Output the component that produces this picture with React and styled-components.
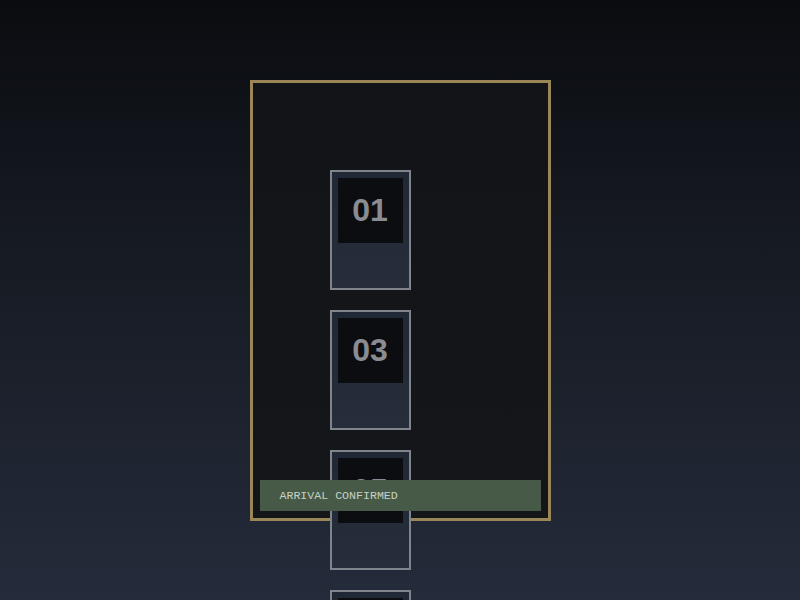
import React from "react"
import styled, { createGlobalStyle } from "styled-components"

const GlobalStyle = createGlobalStyle`
    html, body {
        margin: 0;
        height: 100%;
        overflow: hidden;
    }
    body {
        background: linear-gradient(180deg, #0a0c10 0%, #161a22 40%, #242b3a 100%);
        font-family: "Liberation Sans", Arial, sans-serif;
    }
`

const Stage = styled.main`
    height: 600px;
    display: flex;
    justify-content: center;
    padding-top: 80px;
    box-sizing: border-box;
`

const Panel = styled.section`
    position: relative;
    width: 301px;
    height: 441px;
    box-sizing: border-box;
    border: 3px solid #9a8657;
    background: linear-gradient(180deg, #131418 0%, #15161a 100%);
    padding: 87px 0 0 77px;
`

const Stack = styled.div`
    display: flex;
    flex-direction: column;
    gap: 20px;
`

const Car = styled.div`
    width: 81px;
    height: 120px;
    box-sizing: border-box;
    border: 2px solid #80848d;
    padding: 6px;
    background: linear-gradient(180deg, #212835 0%, #262d3b 100%);
`

const Plate = styled.div`
    width: 65px;
    height: 65px;
    background: #0c0d10;
    display: flex;
    align-items: center;
    justify-content: center;
    font-size: 32px;
    font-weight: bold;
    color: #8a8c92;
`

const Toast = styled.div`
    position: absolute;
    left: 7px;
    bottom: 7px;
    width: 281px;
    height: 31px;
    box-sizing: border-box;
    padding-left: 20px;
    display: flex;
    align-items: center;
    background: #465a47;
    color: #c8d0c5;
    font-family: "Liberation Mono", "Courier New", monospace;
    font-size: 11.6px;
`

const floors = ["01", "03", "05", "07"]

const App = () =>
    <>
        <GlobalStyle />
        <Stage>
            <Panel>
                <Stack>
                    {floors.map(floor =>
                        <Car key={floor}>
                            <Plate>{floor}</Plate>
                        </Car>
                    )}
                </Stack>
                <Toast>ARRIVAL CONFIRMED</Toast>
            </Panel>
        </Stage>
    </>

export default App
